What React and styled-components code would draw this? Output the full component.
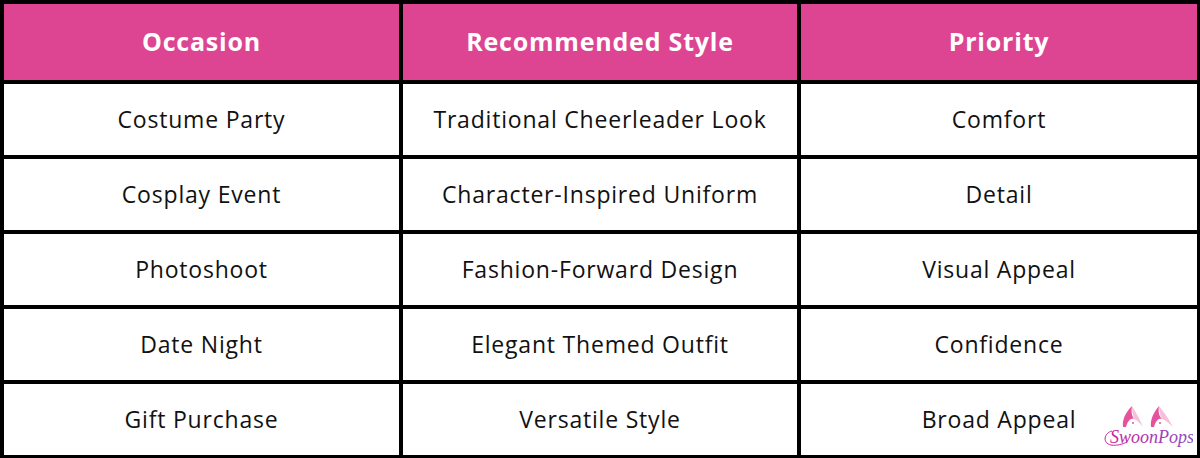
import React from "react";
import styled, { createGlobalStyle } from "styled-components";

const GlobalStyle = createGlobalStyle`
  html, body {
    margin: 0;
    padding: 0;
    background: #fff;
  }
`;

const rows = [
  ["Costume Party", "Traditional Cheerleader Look", "Comfort"],
  ["Cosplay Event", "Character-Inspired Uniform", "Detail"],
  ["Photoshoot", "Fashion-Forward Design", "Visual Appeal"],
  ["Date Night", "Elegant Themed Outfit", "Confidence"],
  ["Gift Purchase", "Versatile Style", "Broad Appeal"],
];

const App = () => {
  return (
    <>
      <GlobalStyle />
      <Table>
        <HeadCell>Occasion</HeadCell>
        <HeadCell>Recommended Style</HeadCell>
        <HeadCell>Priority</HeadCell>
        {rows.map((row, i) =>
          row.map((text, j) => (
            <Cell key={`${i}-${j}`}>
              {text}
              {i === rows.length - 1 && j === 2 && <Logo />}
            </Cell>
          ))
        )}
      </Table>
    </>
  );
};

// swoonpops mark: two bunny ears over the script name
const Logo = () => (
  <LogoWrap>
    <svg width="96" height="44" viewBox="0 0 96 44">
      <defs>
        <linearGradient id="sp" x1="0" y1="0" x2="1" y2="0">
          <stop offset="0" stopColor="#c8249a" />
          <stop offset="0.6" stopColor="#a23bb8" />
          <stop offset="1" stopColor="#8a4fc0" />
        </linearGradient>
      </defs>
      <path
        d="M26 22 C25 14 29 7 35 1 C34 7 35 11 37 14 C34 13 31 15 29 22 Z"
        fill="#e6539d"
      />
      <path
        d="M35 1 C38 6 42 12 46 22 C43 18 40 15 37 14 C36 10 35 6 35 1 Z"
        fill="#f7c0da"
      />
      <path
        d="M54 22 C53 14 57 7 62 1 C61 7 62 11 65 14 C62 13 59 15 57 22 Z"
        fill="#e6539d"
      />
      <path
        d="M62 1 C66 6 71 12 76 22 C72 18 68 15 65 14 C63 10 62 6 62 1 Z"
        fill="#f7c0da"
      />
      <circle cx="36" cy="18" r="0.9" fill="#d8458f" />
      <circle cx="63" cy="18" r="0.9" fill="#d8458f" />
      <text
        x="13"
        y="38"
        fontFamily="'Liberation Serif', serif"
        fontStyle="italic"
        fontSize="18"
        fill="url(#sp)"
      >
        SwoonPops
      </text>
      <path
        d="M15 26 C7 28 5 38 14 40 C20 41 26 39 30 37"
        fill="none"
        stroke="#c8249a"
        strokeWidth="1"
      />
    </svg>
  </LogoWrap>
);

export default App;

const Table = styled.div`
  width: 1200px;
  height: 458px;
  box-sizing: border-box;
  display: grid;
  grid-template-columns: 395px 394px 396px;
  grid-template-rows: 76px repeat(5, 71px);
  column-gap: 4px;
  row-gap: 4px;
  padding: 4px 3px 3px 4px;
  background: #000;
  font-family: "Open Sans", "Noto Sans", sans-serif;
`;

const HeadCell = styled.div`
  background: #dd4592;
  color: #fff;
  font-weight: 700;
  font-size: 25px;
  letter-spacing: 0.8px;
  display: flex;
  align-items: center;
  justify-content: center;
  padding-bottom: 3px;
`;

const Cell = styled.div`
  position: relative;
  background: #fff;
  color: #111;
  font-size: 23px;
  letter-spacing: 0.8px;
  display: flex;
  align-items: center;
  justify-content: center;
  padding-bottom: 2px;
`;

const LogoWrap = styled.div`
  position: absolute;
  right: 4px;
  bottom: 6px;
  line-height: 0;
  letter-spacing: 0;
`;
